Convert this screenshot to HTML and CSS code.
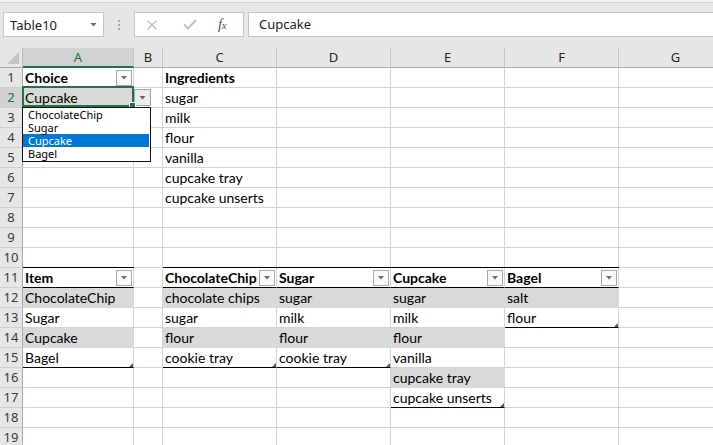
FILE: index.html
```html
<!DOCTYPE html>
<html>
<head>
<meta charset="utf-8">
<link rel="stylesheet" href="styles.css">
</head>
<body>
<div class="app">
  <div class="topline"></div>
  <div class="toolbar">
    <div class="namebox"><span class="nb-text">Table10</span><span class="nb-arrow"></span></div>
    <div class="sep"><i></i><i></i><i></i></div>
    <div class="fbtns">
      <svg class="ic-x" width="10" height="10" viewBox="0 0 10 10"><path d="M0.5 0.5L9.5 9.5M9.5 0.5L0.5 9.5" stroke="#c0c0c0" stroke-width="1.4" fill="none"/></svg>
      <svg class="ic-ok" width="14" height="11" viewBox="0 0 14 11"><path d="M1 5.5L5 9.5L13 1" stroke="#c0c0c0" stroke-width="2" fill="none"/></svg>
      <span class="fx">f<small>x</small></span>
    </div>
    <div class="finput">Cupcake</div>
  </div>
  <div class="sheet">
    <div class="corner"><svg width="22" height="19" viewBox="0 0 22 19"><path d="M19 4V16H7Z" fill="#c4c4c4"/></svg></div>
    <div class="ch sel">A</div><div class="ch">B</div><div class="ch">C</div><div class="ch">D</div><div class="ch">E</div><div class="ch">F</div><div class="ch">G</div>

    <div class="rh">1</div>
    <div class="c b"><span class="t">Choice</span><span class="fb"></span></div>
    <div class="c"></div>
    <div class="c b"><span class="t">Ingredients</span></div>
    <div class="c"></div><div class="c"></div><div class="c"></div><div class="c"></div>

    <div class="rh rsel">2</div>
    <div class="c g act"><span class="t">Cupcake</span>
      <span class="ddbtn"></span>
      <span class="fh"></span>
      <div class="list">
        <div class="li">ChocolateChip</div>
        <div class="li">Sugar</div>
        <div class="li on">Cupcake</div>
        <div class="li">Bagel</div>
      </div>
    </div>
    <div class="c"></div>
    <div class="c"><span class="t">sugar</span></div>
    <div class="c"></div><div class="c"></div><div class="c"></div><div class="c"></div>

    <div class="rh">3</div>
    <div class="c"></div><div class="c"></div>
    <div class="c"><span class="t">milk</span></div>
    <div class="c"></div><div class="c"></div><div class="c"></div><div class="c"></div>

    <div class="rh">4</div>
    <div class="c"></div><div class="c"></div>
    <div class="c"><span class="t">flour</span></div>
    <div class="c"></div><div class="c"></div><div class="c"></div><div class="c"></div>

    <div class="rh">5</div>
    <div class="c"></div><div class="c"></div>
    <div class="c"><span class="t">vanilla</span></div>
    <div class="c"></div><div class="c"></div><div class="c"></div><div class="c"></div>

    <div class="rh">6</div>
    <div class="c"></div><div class="c"></div>
    <div class="c"><span class="t">cupcake tray</span></div>
    <div class="c"></div><div class="c"></div><div class="c"></div><div class="c"></div>

    <div class="rh">7</div>
    <div class="c"></div><div class="c"></div>
    <div class="c"><span class="t">cupcake unserts</span></div>
    <div class="c"></div><div class="c"></div><div class="c"></div><div class="c"></div>

    <div class="rh">8</div>
    <div class="c"></div><div class="c"></div><div class="c"></div><div class="c"></div><div class="c"></div><div class="c"></div><div class="c"></div>

    <div class="rh">9</div>
    <div class="c"></div><div class="c"></div><div class="c"></div><div class="c"></div><div class="c"></div><div class="c"></div><div class="c"></div>

    <div class="rh">10</div>
    <div class="c"></div><div class="c"></div><div class="c"></div><div class="c"></div><div class="c"></div><div class="c"></div><div class="c"></div>

    <div class="rh">11</div>
    <div class="c b th"><span class="t">Item</span><span class="fb"></span></div>
    <div class="c"></div>
    <div class="c b th"><span class="t">ChocolateChip</span><span class="fb"></span></div>
    <div class="c b th"><span class="t">Sugar</span><span class="fb"></span></div>
    <div class="c b th"><span class="t">Cupcake</span><span class="fb"></span></div>
    <div class="c b th"><span class="t">Bagel</span><span class="fb"></span></div>
    <div class="c"></div>

    <div class="rh">12</div>
    <div class="c g"><span class="t">ChocolateChip</span></div>
    <div class="c"></div>
    <div class="c g"><span class="t">chocolate chips</span></div>
    <div class="c g"><span class="t">sugar</span></div>
    <div class="c g"><span class="t">sugar</span></div>
    <div class="c g"><span class="t">salt</span></div>
    <div class="c"></div>

    <div class="rh">13</div>
    <div class="c"><span class="t">Sugar</span></div>
    <div class="c"></div>
    <div class="c"><span class="t">sugar</span></div>
    <div class="c"><span class="t">milk</span></div>
    <div class="c"><span class="t">milk</span></div>
    <div class="c te"><span class="t">flour</span></div>
    <div class="c"></div>

    <div class="rh">14</div>
    <div class="c g"><span class="t">Cupcake</span></div>
    <div class="c"></div>
    <div class="c g"><span class="t">flour</span></div>
    <div class="c g"><span class="t">flour</span></div>
    <div class="c g"><span class="t">flour</span></div>
    <div class="c"></div>
    <div class="c"></div>

    <div class="rh">15</div>
    <div class="c te"><span class="t">Bagel</span></div>
    <div class="c"></div>
    <div class="c te"><span class="t">cookie tray</span></div>
    <div class="c te"><span class="t">cookie tray</span></div>
    <div class="c"><span class="t">vanilla</span></div>
    <div class="c"></div>
    <div class="c"></div>

    <div class="rh">16</div>
    <div class="c"></div><div class="c"></div><div class="c"></div><div class="c"></div>
    <div class="c g"><span class="t">cupcake tray</span></div>
    <div class="c"></div><div class="c"></div>

    <div class="rh">17</div>
    <div class="c"></div><div class="c"></div><div class="c"></div><div class="c"></div>
    <div class="c te"><span class="t">cupcake unserts</span></div>
    <div class="c"></div><div class="c"></div>

    <div class="rh">18</div>
    <div class="c"></div><div class="c"></div><div class="c"></div><div class="c"></div><div class="c"></div><div class="c"></div><div class="c"></div>

    <div class="rh">19</div>
    <div class="c"></div><div class="c"></div><div class="c"></div><div class="c"></div><div class="c"></div><div class="c"></div><div class="c"></div>
  </div>
</div>
</body>
</html>
```
FILE: styles.css
```css
html, body {
  margin: 0;
  padding: 0;
  background: #ffffff;
}
.app {
  width: 713px;
  height: 445px;
  overflow: hidden;
  background: #e6e6e6;
}
.topline {
  height: 2px;
  background: #f1f1f1;
  border-bottom: 1px solid #d6d6d6;
}
.toolbar {
  height: 45px;
  box-sizing: border-box;
  padding: 9px 0 0 3px;
  display: flex;
  align-items: flex-start;
  font-family: "Noto Sans", "Liberation Sans", sans-serif;
  font-size: 13px;
  color: #222;
}
.namebox {
  width: 101px;
  height: 25px;
  box-sizing: border-box;
  background: #fff;
  border: 1px solid #c6c6c6;
  display: flex;
  align-items: center;
  padding-left: 6px;
  padding-right: 6px;
}
.nb-text { flex: 1; }
.nb-arrow {
  width: 7px;
  height: 4px;
  background: #6a6a6a;
  clip-path: polygon(0 0, 100% 0, 50% 100%);
}
.sep {
  width: 30px;
  height: 25px;
  display: flex;
  flex-direction: column;
  align-items: center;
  justify-content: center;
  gap: 2px;
}
.sep i {
  display: block;
  width: 2px;
  height: 2px;
  background: #a8a8a8;
}
.fbtns {
  width: 110px;
  height: 25px;
  box-sizing: border-box;
  background: #fff;
  border: 1px solid #c6c6c6;
  display: flex;
  align-items: center;
  padding-left: 12px;
}
.ic-x { margin-right: 26px; }
.ic-ok { margin-right: 21px; }
.fx {
  font-family: "Liberation Serif", serif;
  font-style: italic;
  font-size: 15px;
  color: #555;
  letter-spacing: -0.5px;
}
.fx small { font-size: 11px; }
.finput {
  margin-left: 4px;
  flex: 1;
  height: 25px;
  box-sizing: border-box;
  background: #fff;
  border: 1px solid #c6c6c6;
  border-right: none;
  padding-left: 10px;
  line-height: 23px;
}
.sheet {
  display: grid;
  grid-template-columns: 23px 111px 29px 114px 114px 114px 114px 114px;
  grid-auto-rows: 20px;
  background: #fff;
  width: 733px;
}
.corner {
  background: #e6e6e6;
  border-right: 1px solid #bdbdbd;
  border-bottom: 1px solid #ababab;
  box-sizing: border-box;
}
.corner svg { display: block; }
.ch {
  background: #e6e6e6;
  border-right: 1px solid #c6c6c6;
  border-bottom: 1px solid #ababab;
  box-sizing: border-box;
  text-align: center;
  font-family: "Noto Sans", "Liberation Sans", sans-serif;
  font-size: 13px;
  line-height: 19px;
  color: #262626;
}
.ch.sel {
  background: #d2d2d2;
  color: #217346;
  border-bottom: 2px solid #217346;
  line-height: 18px;
}
.rh {
  background: #e6e6e6;
  border-right: 1px solid #ababab;
  border-bottom: 1px solid #cfcfcf;
  box-sizing: border-box;
  text-align: center;
  font-family: "Noto Sans", "Liberation Sans", sans-serif;
  font-size: 13px;
  line-height: 19px;
  color: #3a3a3a;
}
.rh.rsel {
  background: #d2d2d2;
  color: #217346;
}
.c {
  box-sizing: border-box;
  border-right: 1px solid #d4d4d4;
  border-bottom: 1px solid #d4d4d4;
  padding: 0 1px 0 2px;
  display: flex;
  align-items: center;
  font-family: Lato, "Liberation Sans", sans-serif;
  font-size: 14px;
  line-height: 19px;
  color: #000;
  white-space: nowrap;
  min-width: 0;
  position: relative;
}
.c .t {
  flex: 1;
  min-width: 0;
  overflow: hidden;
}
.c.b { font-weight: bold; }
.c.g {
  background: #d9d9d9;
  border-right-color: #d9d9d9;
  border-bottom-color: #d9d9d9;
}
.c.th {
  border-bottom-color: #000;
  box-shadow: 0 -1px 0 #000;
}
.c.te { border-bottom-color: #000; }
.c.te::after {
  content: "";
  position: absolute;
  right: 0;
  bottom: 0;
  width: 4px;
  height: 4px;
  background: #3f51a8;
  clip-path: polygon(100% 0, 100% 100%, 0 100%);
}
.fb {
  flex-shrink: 0;
  width: 16px;
  height: 16px;
  box-sizing: border-box;
  border: 1px solid #a9a9a9;
  background: #fafafa;
  display: flex;
  align-items: center;
  justify-content: center;
}
.fb::after {
  content: "";
  width: 7px;
  height: 4px;
  background: #727272;
  clip-path: polygon(0 0, 100% 0, 50% 100%);
}
.act {
  z-index: 3;
  overflow: visible;
}
.act::after {
  content: "";
  position: absolute;
  left: -1px;
  top: -2px;
  width: 112px;
  height: 21px;
  box-sizing: border-box;
  border: 2px solid #217346;
}
.fh {
  position: absolute;
  right: -2px;
  bottom: -1px;
  width: 5px;
  height: 5px;
  box-sizing: border-box;
  background: #217346;
  outline: 1px solid #fff;
  z-index: 1;
}
.ddbtn {
  position: absolute;
  left: 111px;
  top: 1px;
  width: 17px;
  height: 17px;
  box-sizing: border-box;
  border: 1px solid #a6a6a6;
  background: #ebebeb;
  display: flex;
  align-items: center;
  justify-content: center;
}
.ddbtn::after {
  content: "";
  width: 7px;
  height: 4px;
  background: #666;
  clip-path: polygon(0 0, 100% 0, 50% 100%);
}
.list {
  position: absolute;
  left: -1px;
  top: 19px;
  width: 129px;
  height: 55px;
  box-sizing: border-box;
  border: 1px solid #111;
  background: #fff;
  font-family: "Noto Sans", "Liberation Sans", sans-serif;
  font-weight: normal;
  font-size: 11px;
  line-height: 13px;
  z-index: 4;
}
.li {
  height: 13px;
  padding-left: 5px;
  margin-right: 1px;
  color: #000;
}
.li.on {
  background: #0078d7;
  color: #fff;
}
```
